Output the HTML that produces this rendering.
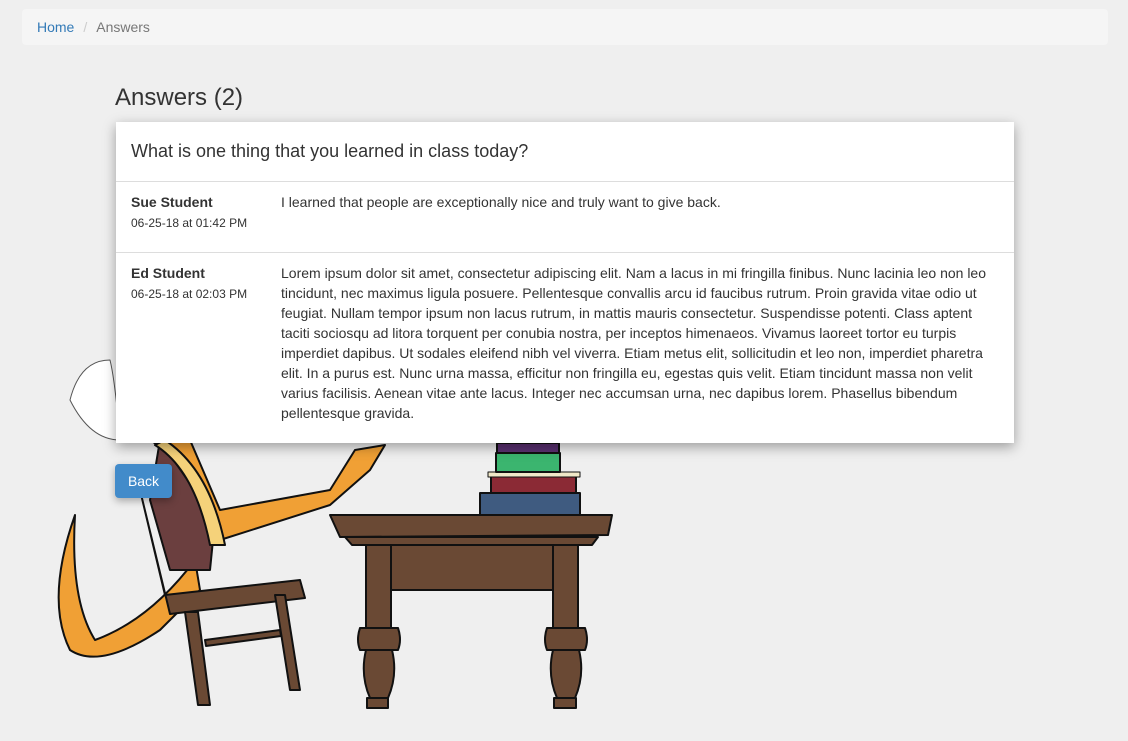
<!DOCTYPE html>
<html><head><meta charset="utf-8"><style>
*{box-sizing:border-box}
body{margin:0;background:#efefef;font-family:"Liberation Sans",sans-serif;font-size:14px;color:#333;width:1128px;height:741px;overflow:hidden;position:relative}
.bc{position:absolute;left:22px;top:9px;width:1086px;height:36px;background:#f5f5f5;border-radius:4px;padding:9px 15px;line-height:18px}
.bc a{color:#337ab7;text-decoration:none}
.bc .s{color:#ccc;padding:0 9px}
.bc .c{color:#777}
h1{position:absolute;left:115px;top:83px;margin:0;font-size:24px;font-weight:500;line-height:30px}
svg.art{position:absolute;left:0;top:0}
.card{position:absolute;left:116px;top:122px;width:898px;height:321px;background:#fff;box-shadow:0 4px 12px rgba(0,0,0,.35)}
.card .t{height:60px;border-bottom:1px solid #ddd;padding:18px 15px;font-size:18px;line-height:22px}
.row{position:relative;border-bottom:1px solid #ddd;padding:10px 15px 20px 165px;line-height:20px}
.row .n{position:absolute;left:15px;top:10px;font-weight:bold;white-space:nowrap}
.row .d{position:absolute;left:15px;top:31px;font-size:12px;line-height:20px;white-space:nowrap}
.btn{position:absolute;left:115px;top:464px;width:57px;height:34px;background:#428bca;border-radius:4px;color:#fff;line-height:34px;text-align:center;box-shadow:0 3px 8px rgba(0,0,0,.3)}
</style></head><body>
<div class="bc"><a>Home</a><span class="s">/</span><span class="c">Answers</span></div>
<h1>Answers (2)</h1>
<svg class="art" width="1128" height="741" viewBox="0 0 1128 741">
<g stroke="#111" stroke-width="2" stroke-linejoin="round">
<path d="M75 515 Q45 600 70 650 Q100 670 160 630 L200 590 L195 560 Q150 620 95 640 Q70 600 75 515Z" fill="#f0a035"/>
<path d="M120 440 Q115 380 110 360 Q80 360 70 400 Q90 440 120 440Z" fill="#fff" stroke="#555" stroke-width="1"/>
<path d="M150 440 Q200 470 220 540 L330 505 L370 470 L385 445 L355 450 L330 490 L220 510 L190 440Z" fill="#f0a035"/>
<path d="M160 440 L215 520 L210 570 L170 570 L150 500Z" fill="#6b3f3f"/>
<path d="M165 440 Q210 470 225 545 L210 545 Q195 470 155 445Z" fill="#f5d27a"/>
<path d="M140 490 L165 595 L300 580 L305 598 L170 614 Z" fill="#6a4934"/>
<path d="M185 612 L198 705 L210 705 L198 612Z M275 595 L290 690 L300 690 L285 595Z" fill="#6a4934"/>
<path d="M205 640 L280 630 L281 636 L206 646Z" fill="#6a4934"/>
<path d="M330 515 L612 515 L608 535 L340 537Z" fill="#6a4934"/>
<path d="M345 537 L598 537 L592 545 L352 545Z" fill="#6a4934"/>
<path d="M366 545 L391 545 L391 628 L366 628Z M553 545 L578 545 L578 628 L553 628Z" fill="#6a4934"/>
<path d="M391 545 L553 545 L553 590 L391 590Z" fill="#6a4934"/>
<path d="M360 628 L398 628 Q402 640 398 650 L360 650 Q356 640 360 628Z M547 628 L585 628 Q589 640 585 650 L547 650 Q543 640 547 628Z" fill="#6a4934"/>
<path d="M366 650 L392 650 Q398 675 388 698 L370 698 Q360 675 366 650Z M553 650 L579 650 Q585 675 575 698 L557 698 Q547 675 553 650Z" fill="#6a4934"/>
<path d="M367 698 L388 698 L388 708 L367 708Z M554 698 L576 698 L576 708 L554 708Z" fill="#6a4934"/>
<rect x="480" y="493" width="100" height="22" fill="#3f5b80"/>
<rect x="491" y="476" width="85" height="17" fill="#8b2a35"/>
<rect x="488" y="472" width="92" height="5" fill="#f0e8c8" stroke-width="1"/>
<rect x="496" y="453" width="64" height="19" fill="#3bb56f"/>
<rect x="497" y="443" width="62" height="10" fill="#5a3070"/>
</g>
</svg>
<div class="card">
<div class="t">What is one thing that you learned in class today?</div>
<div class="row" style="height:71px"><div class="n">Sue Student</div><div class="d">06-25-18 at 01:42 PM</div>I learned that people are exceptionally nice and truly want to give back.</div>
<div class="row" style="border-bottom:0"><div class="n">Ed Student</div><div class="d">06-25-18 at 02:03 PM</div>Lorem ipsum dolor sit amet, consectetur adipiscing elit. Nam a lacus in mi fringilla finibus. Nunc lacinia leo non leo tincidunt, nec maximus ligula posuere. Pellentesque convallis arcu id faucibus rutrum. Proin gravida vitae odio ut feugiat. Nullam tempor ipsum non lacus rutrum, in mattis mauris consectetur. Suspendisse potenti. Class aptent taciti sociosqu ad litora torquent per conubia nostra, per inceptos himenaeos. Vivamus laoreet tortor eu turpis imperdiet dapibus. Ut sodales eleifend nibh vel viverra. Etiam metus elit, sollicitudin et leo non, imperdiet pharetra elit. In a purus est. Nunc urna massa, efficitur non fringilla eu, egestas quis velit. Etiam tincidunt massa non velit varius facilisis. Aenean vitae ante lacus. Integer nec accumsan urna, nec dapibus lorem. Phasellus bibendum pellentesque gravida.</div>
</div>
<div class="btn">Back</div>
</body></html>
